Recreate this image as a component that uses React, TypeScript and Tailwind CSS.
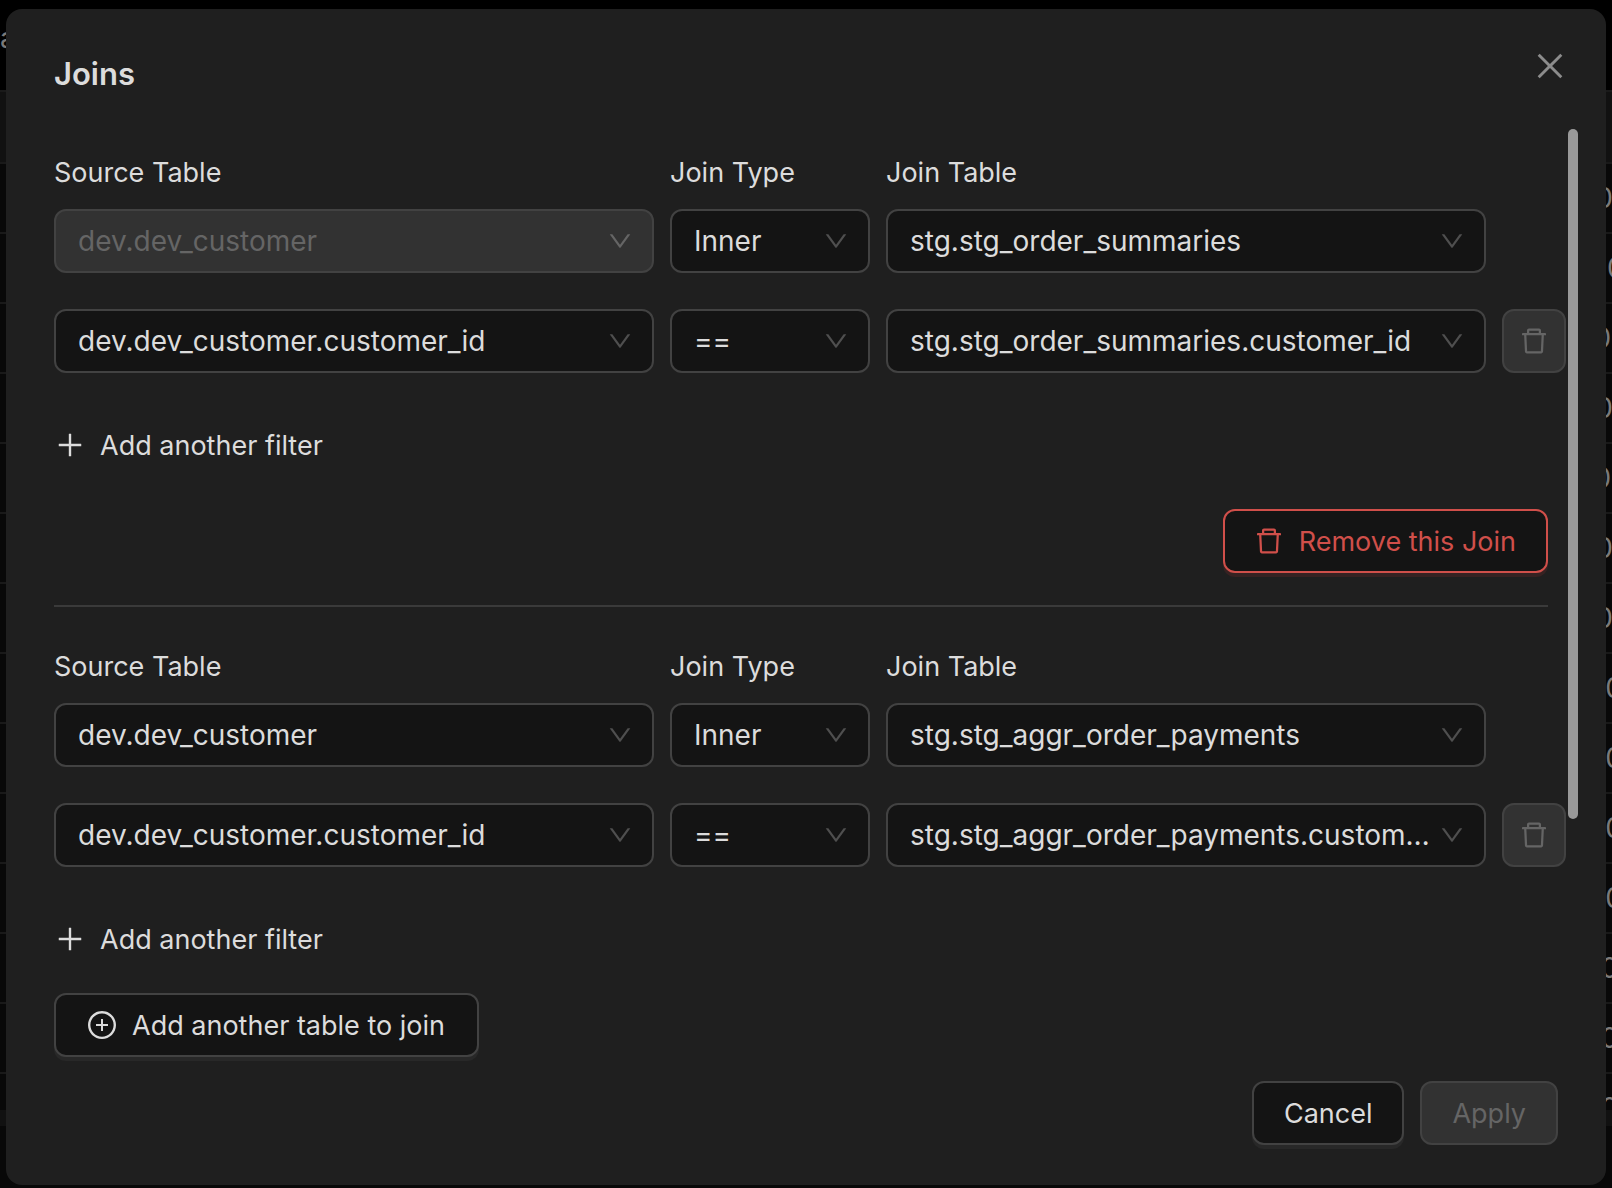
import React from "react";
import {
  AiOutlineClose,
  AiOutlineDelete,
  AiOutlineDown,
  AiOutlinePlus,
  AiOutlinePlusCircle,
} from "react-icons/ai";

// crops the built-in padding of the ant icons
const iconBox = "64 64 896 896";

const joins = [
  {
    source: "dev.dev_customer",
    sourceLocked: true,
    type: "Inner",
    table: "stg.stg_order_summaries",
    filter: {
      left: "dev.dev_customer.customer_id",
      op: "==",
      right: "stg.stg_order_summaries.customer_id",
    },
  },
  {
    source: "dev.dev_customer",
    sourceLocked: false,
    type: "Inner",
    table: "stg.stg_aggr_order_payments",
    filter: {
      left: "dev.dev_customer.customer_id",
      op: "==",
      right: "stg.stg_aggr_order_payments.customer_id",
    },
  },
];

const totals = [
  "60", "100", "70", "60", "70", "60", "60", "710", "710", "710", "710",
  "110", "110", "110",
];

type SelectProps = {
  id?: string;
  label?: string;
  value: string;
  disabled?: boolean;
};

function Select({ id, label, value, disabled }: SelectProps) {
  return (
    <div className="grid items-center">
      <select
        id={id}
        aria-label={label}
        defaultValue={value}
        disabled={disabled}
        className="col-start-1 row-start-1 h-16 w-full appearance-none truncate rounded-xl border-2 border-[#424242] bg-[#141414] pl-[22px] pr-[50px] text-[28px] text-[#dcdcdc] opacity-100 outline-none disabled:bg-[#323232] disabled:text-[#656565]"
      >
        <option>{value}</option>
      </select>
      <AiOutlineDown
        viewBox={iconBox}
        className={`pointer-events-none col-start-1 row-start-1 mr-[22px] h-6 w-6 justify-self-end ${
          disabled ? "text-[#656565]" : "text-[#4f4f4f]"
        }`}
      />
    </div>
  );
}

function Join({ join, index }: { join: (typeof joins)[number]; index: number }) {
  return (
    <section className="pt-5">
      <div className="grid grid-cols-[3fr_1fr_3fr_64px] gap-x-4">
        <label htmlFor={`source-${index}`} className="mb-3 leading-[48px]">
          Source Table
        </label>
        <label htmlFor={`type-${index}`} className="mb-3 leading-[48px]">
          Join Type
        </label>
        <label htmlFor={`table-${index}`} className="mb-3 leading-[48px]">
          Join Table
        </label>
        <span />

        <Select
          id={`source-${index}`}
          value={join.source}
          disabled={join.sourceLocked}
        />
        <Select id={`type-${index}`} value={join.type} />
        <Select id={`table-${index}`} value={join.table} />
      </div>

      <div className="mt-9 grid grid-cols-[3fr_1fr_3fr_64px] gap-x-4">
        <Select label="Source column" value={join.filter.left} />
        <Select label="Operator" value={join.filter.op} />
        <Select label="Join column" value={join.filter.right} />
        <button
          type="button"
          disabled
          aria-label="Remove filter"
          className="flex h-16 w-16 items-center justify-center rounded-xl border-2 border-[#424242] bg-[#323232] text-[#656565]"
        >
          <AiOutlineDelete viewBox={iconBox} className="h-7 w-7" />
        </button>
      </div>

      <button
        type="button"
        className="mt-10 flex h-16 items-center gap-4 border-2 border-transparent"
      >
        <AiOutlinePlus viewBox={iconBox} className="h-7 w-7" />
        <span className="pt-[3px]">Add another filter</span>
      </button>
    </section>
  );
}

// results grid that sits behind the dialog
function Backdrop() {
  return (
    <div
      aria-hidden="true"
      className="absolute inset-0 overflow-hidden bg-[#080808] text-[28px] text-[#7a7a7a]"
    >
      <div className="h-[1110px] overflow-hidden">
        <div className="h-[90px] bg-black pt-4 leading-[44px]">a</div>
        <div className="h-[72px] border-t-2 border-[#1a1a1a] bg-[#111111]" />
        {totals.map((total, i) => (
          <div
            key={i}
            className="flex h-[70px] items-center justify-end border-t-2 border-[#191919]"
          >
            <span className="w-[34px]">{total}</span>
          </div>
        ))}
      </div>
      <div className="h-4 bg-[#111111]" />
    </div>
  );
}

export default function App() {
  return (
    <div className="relative min-h-screen bg-black px-[6px] pt-[9px] font-[Inter,sans-serif] text-[27px] text-[#dcdcdc]">
      <Backdrop />
      <div
        role="dialog"
        aria-labelledby="joins-title"
        className="relative flex flex-col rounded-2xl bg-[#1f1f1f] pb-10 pl-12 pr-7"
      >
        <header className="flex items-start justify-between pb-[31px] pr-3 pt-[41px]">
          <h1
            id="joins-title"
            className="text-[31px] font-semibold leading-[48px]"
          >
            Joins
          </h1>
          <button type="button" aria-label="Close" className="text-[#8c8c8c]">
            <AiOutlineClose viewBox={iconBox} className="h-8 w-8" />
          </button>
        </header>

        <div className="flex gap-0.5">
          <div className="min-w-0 flex-1">
            <Join join={joins[0]} index={0} />
            <div className="mb-4 mr-[18px] mt-8 flex justify-end border-b-2 border-[#3a3a3a] pb-8">
              <button
                type="button"
                className="flex h-16 items-center gap-4 rounded-xl border-2 border-[#d04f4a] bg-[#141414] px-[30px] text-[#d04f4a] shadow-[0_4px_0_#362222]"
              >
                <AiOutlineDelete viewBox={iconBox} className="h-7 w-7" />
                <span className="pt-[3px]">Remove this Join</span>
              </button>
            </div>
            <Join join={joins[1]} index={1} />
            <button
              type="button"
              className="mt-[22px] flex h-16 items-center gap-4 rounded-xl border-2 border-[#424242] bg-[#141414] px-8 shadow-[0_4px_0_#282828]"
            >
              <AiOutlinePlusCircle viewBox={iconBox} className="h-7 w-7" />
              <span className="pt-[3px]">Add another table to join</span>
            </button>
          </div>
          <div className="h-[690px] w-[10px] rounded-full bg-[#999999]" />
        </div>

        <footer className="mt-6 flex justify-end gap-4 pr-5">
          <button
            type="button"
            className="h-16 rounded-xl border-2 border-[#424242] bg-[#141414] px-[30px] pt-[3px] shadow-[0_4px_0_#282828]"
          >
            Cancel
          </button>
          <button
            type="button"
            disabled
            className="h-16 rounded-xl border-2 border-[#424242] bg-[#323232] px-[30px] pt-[3px] text-[#656565]"
          >
            Apply
          </button>
        </footer>
      </div>
    </div>
  );
}
